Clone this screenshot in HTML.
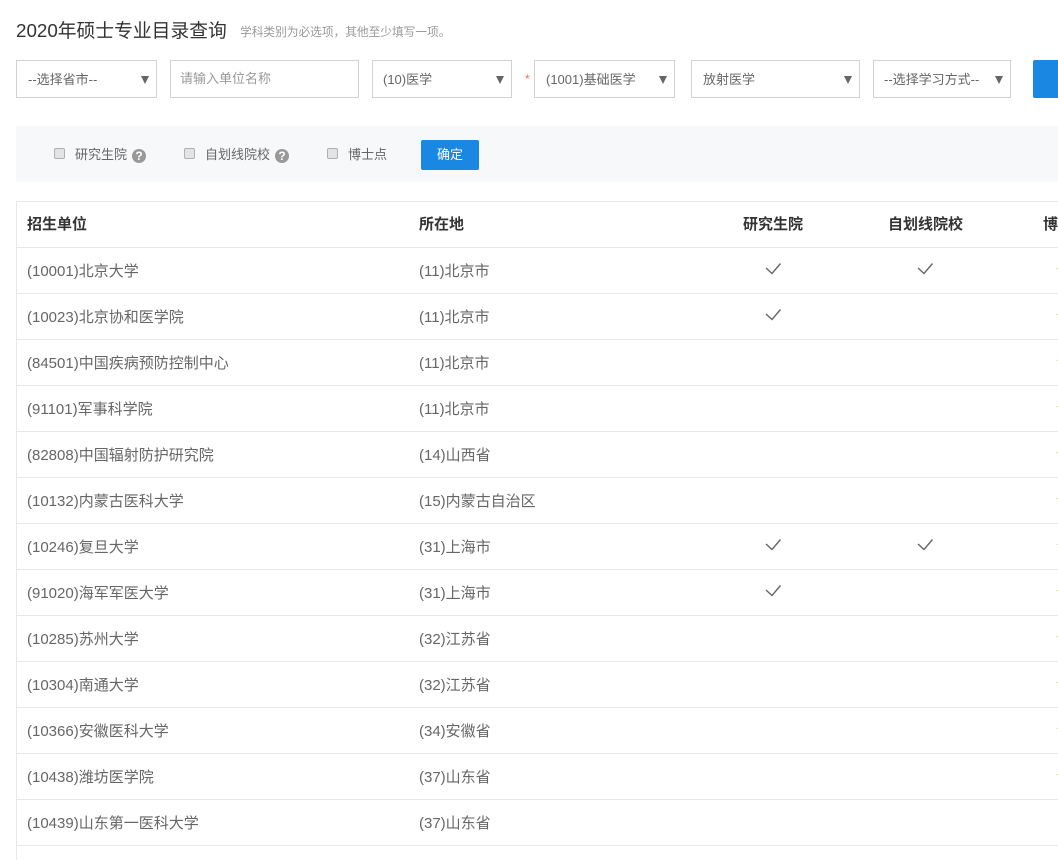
<!DOCTYPE html>
<html lang="zh">
<head>
<meta charset="utf-8">
<title>2020年硕士专业目录查询</title>
<style>
html,body{margin:0;padding:0;width:1058px;height:860px;overflow:hidden;background:#fff}
body{position:relative;font-family:"Liberation Sans","Noto Sans CJK SC",sans-serif;font-size:15px;color:#666}
.a{position:absolute;white-space:nowrap}
.f{position:absolute;top:60px;height:38px;box-sizing:border-box;border:1px solid #d2d2d2;line-height:37px;font-size:13px;color:#666;padding-left:11px;white-space:nowrap;background:#fff}
.f i{position:absolute;right:7px;top:15px;width:0;height:0;border-left:4px solid transparent;border-right:4px solid transparent;border-top:8px solid #666}
.cb{position:absolute;top:148px;width:9px;height:9px;border:1px solid #b0b0b0;border-radius:2px;background:#e4e4e4}
.q{position:absolute;top:149px;width:14px;height:14px;border-radius:50%;background:#999;color:#fff;font-size:12px;font-weight:bold;line-height:14px;text-align:center}
.l{position:absolute;left:16px;width:1042px;height:1px;background:#e8e8e8}
.h{position:absolute;top:216px;line-height:18px;font-size:15px;font-weight:bold;color:#333;white-space:nowrap}
.t{position:absolute;line-height:18px;font-size:15px;color:#666;white-space:nowrap}
.d{position:absolute;left:1057px;width:1px;height:1px;background:#f6c890}
svg{position:absolute;left:0;top:0}
</style>
</head>
<body>
<div class="a" style="left:16px;top:18px;font-size:18.8px;line-height:26px;color:#333">2020年硕士专业目录查询</div>
<div class="a" style="left:240px;top:24px;font-size:11.7px;line-height:18px;color:#999">学科类别为必选项，其他至少填写一项。</div>

<div class="f" style="left:16px;width:141px">--选择省市--<i></i></div>
<div class="f" style="left:170px;width:189px;color:#999;line-height:36px;padding-left:9px">请输入单位名称</div>
<div class="f" style="left:372px;width:140px;padding-left:10px">(10)医学<i></i></div>
<div class="a" style="left:525px;top:72px;font-size:12px;line-height:14px;color:#f36b5c">*</div>
<div class="f" style="left:534px;width:141px">(1001)基础医学<i></i></div>
<div class="f" style="left:691px;width:169px">放射医学<i></i></div>
<div class="f" style="left:873px;width:138px;padding-left:10px">--选择学习方式--<i></i></div>
<div class="a" style="left:1033px;top:60px;width:25px;height:38px;background:#1a87e2;border-radius:2px 0 0 2px"></div>

<div class="a" style="left:16px;top:126px;width:1042px;height:56px;background:#f7f8fa"></div>
<div class="cb" style="left:54px"></div>
<div class="a" style="left:75px;top:146px;font-size:13px;line-height:18px">研究生院</div>
<div class="q" style="left:132px">?</div>
<div class="cb" style="left:184px"></div>
<div class="a" style="left:205px;top:146px;font-size:13px;line-height:18px">自划线院校</div>
<div class="q" style="left:275px">?</div>
<div class="cb" style="left:327px"></div>
<div class="a" style="left:348px;top:146px;font-size:13px;line-height:18px">博士点</div>
<div class="a" style="left:421px;top:140px;width:58px;height:30px;background:#1a87e2;border-radius:2px;color:#fff;font-size:13px;line-height:30px;text-align:center">确定</div>

<div class="a" style="left:16px;top:201px;width:1px;height:659px;background:#e8e8e8"></div>
<div class="l" style="top:201px"></div>
<div class="l" style="top:247px"></div>
<div class="l" style="top:293px"></div>
<div class="l" style="top:339px"></div>
<div class="l" style="top:385px"></div>
<div class="l" style="top:431px"></div>
<div class="l" style="top:477px"></div>
<div class="l" style="top:523px"></div>
<div class="l" style="top:569px"></div>
<div class="l" style="top:615px"></div>
<div class="l" style="top:661px"></div>
<div class="l" style="top:707px"></div>
<div class="l" style="top:753px"></div>
<div class="l" style="top:799px"></div>
<div class="l" style="top:845px"></div>

<div class="h" style="left:27px">招生单位</div>
<div class="h" style="left:419px">所在地</div>
<div class="h" style="left:743px">研究生院</div>
<div class="h" style="left:888px">自划线院校</div>
<div class="h" style="left:1043px">博士点</div>

<div class="t" style="left:27px;top:263px">(10001)北京大学</div><div class="t" style="left:419px;top:263px">(11)北京市</div>
<div class="t" style="left:27px;top:309px">(10023)北京协和医学院</div><div class="t" style="left:419px;top:309px">(11)北京市</div>
<div class="t" style="left:27px;top:355px">(84501)中国疾病预防控制中心</div><div class="t" style="left:419px;top:355px">(11)北京市</div>
<div class="t" style="left:27px;top:401px">(91101)军事科学院</div><div class="t" style="left:419px;top:401px">(11)北京市</div>
<div class="t" style="left:27px;top:447px">(82808)中国辐射防护研究院</div><div class="t" style="left:419px;top:447px">(14)山西省</div>
<div class="t" style="left:27px;top:493px">(10132)内蒙古医科大学</div><div class="t" style="left:419px;top:493px">(15)内蒙古自治区</div>
<div class="t" style="left:27px;top:539px">(10246)复旦大学</div><div class="t" style="left:419px;top:539px">(31)上海市</div>
<div class="t" style="left:27px;top:585px">(91020)海军军医大学</div><div class="t" style="left:419px;top:585px">(31)上海市</div>
<div class="t" style="left:27px;top:631px">(10285)苏州大学</div><div class="t" style="left:419px;top:631px">(32)江苏省</div>
<div class="t" style="left:27px;top:677px">(10304)南通大学</div><div class="t" style="left:419px;top:677px">(32)江苏省</div>
<div class="t" style="left:27px;top:723px">(10366)安徽医科大学</div><div class="t" style="left:419px;top:723px">(34)安徽省</div>
<div class="t" style="left:27px;top:769px">(10438)潍坊医学院</div><div class="t" style="left:419px;top:769px">(37)山东省</div>
<div class="t" style="left:27px;top:815px">(10439)山东第一医科大学</div><div class="t" style="left:419px;top:815px">(37)山东省</div>

<svg width="1058" height="860" fill="none" stroke="#666" stroke-width="1.4">
<path d="M766 268L772 273.5L780.5 263.5"/>
<path d="M918 268L924 273.5L932.5 263.5"/>
<path d="M766 314L772 319.5L780.5 309.5"/>
<path d="M766 544L772 549.5L780.5 539.5"/>
<path d="M918 544L924 549.5L932.5 539.5"/>
<path d="M766 590L772 595.5L780.5 585.5"/>
</svg>

<div class="d" style="top:268px"></div>
<div class="d" style="top:314px"></div>
<div class="d" style="top:360px"></div>
<div class="d" style="top:406px"></div>
<div class="d" style="top:452px"></div>
<div class="d" style="top:498px"></div>
<div class="d" style="top:544px"></div>
<div class="d" style="top:590px"></div>
<div class="d" style="top:636px"></div>
<div class="d" style="top:682px"></div>
<div class="d" style="top:728px"></div>
<div class="d" style="top:774px"></div>
</body>
</html>
